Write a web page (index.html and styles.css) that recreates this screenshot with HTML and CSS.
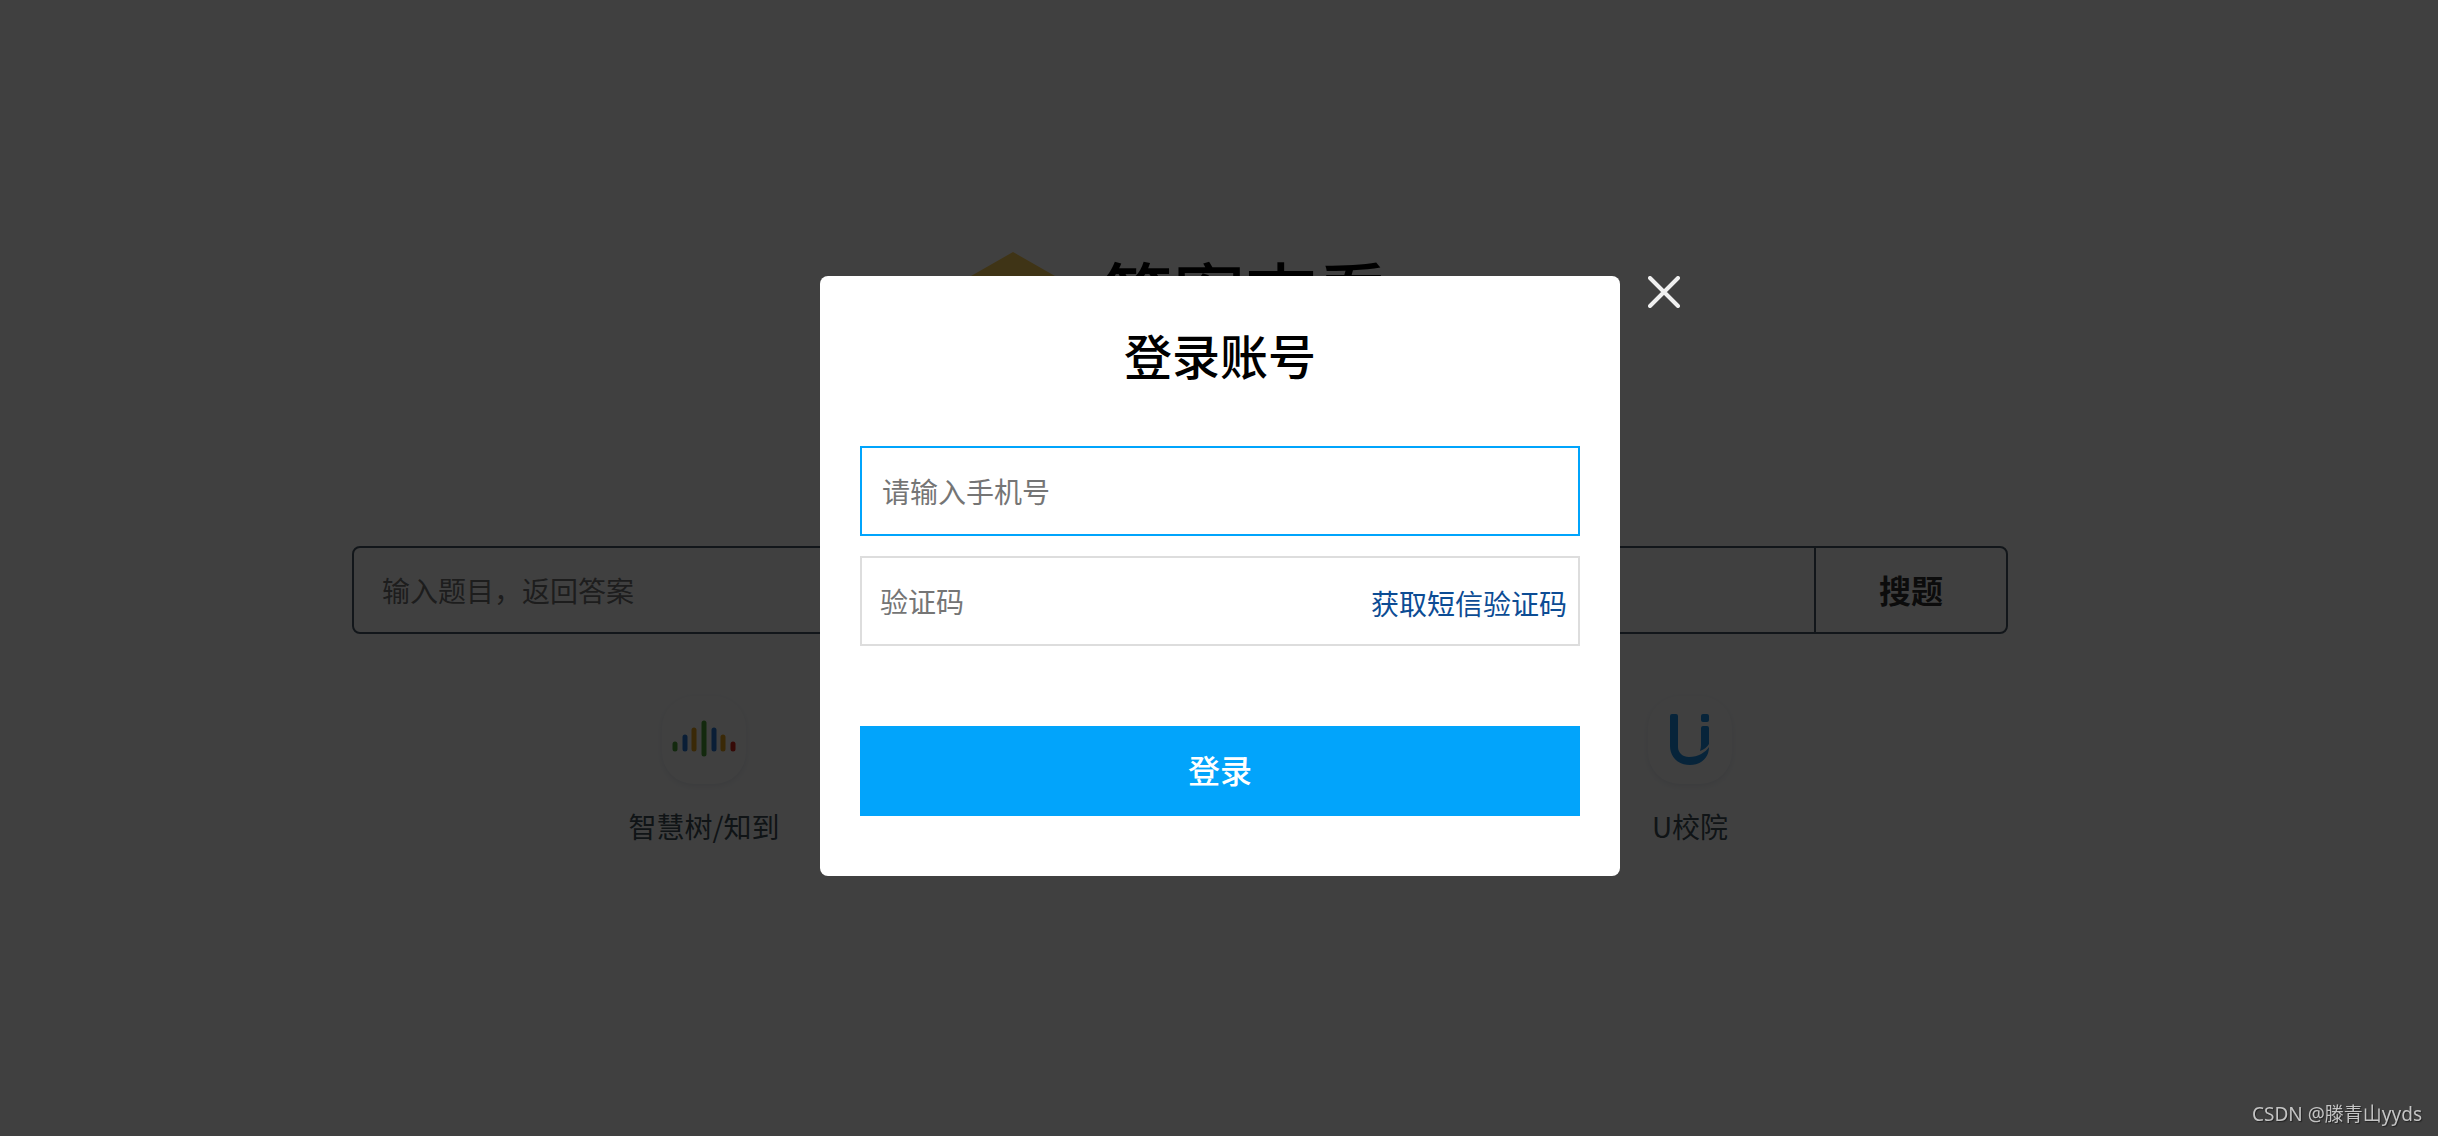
FILE: index.html
```html
<!DOCTYPE html>
<html lang="zh-CN">
<head>
  <meta charset="UTF-8">
  <meta name="viewport" content="width=device-width, initial-scale=1.0">
  <title>答案查看</title>
  <link rel="stylesheet" href="styles.css">
</head>
<body>
  <main class="page">
    <h1 class="logo">
      <svg class="logo-mark" viewBox="0 0 112 128" aria-hidden="true">
        <path d="M56 0 L112 32 V96 L56 128 L0 96 V32 Z" fill="#fcce58"/>
      </svg>
      <span>答案查看</span>
    </h1>

    <form class="search">
      <input class="search-input" type="text" placeholder="输入题目，返回答案" aria-label="输入题目">
      <button class="search-button" type="button">搜题</button>
    </form>

    <nav class="platforms">
      <a class="platform" href="#">
        <span class="platform-icon">
          <svg viewBox="0 0 84 88" aria-hidden="true">
            <g fill="none" stroke-width="5" stroke-linecap="round">
              <path d="M13 48v5" stroke="#4ba33a"/>
              <path d="M23 41v12M52 34v19" stroke="#2878d8"/>
              <path d="M32 34v19M61 41v12" stroke="#e8a21c"/>
              <path d="M42 27v31" stroke="#4ba33a"/>
              <path d="M71 48v5" stroke="#d8281c"/>
            </g>
          </svg>
        </span>
        智慧树/知到
      </a>
      <a class="platform" href="#">
        <span class="platform-icon">
          <svg viewBox="0 0 84 88" aria-hidden="true">
            <path d="M22 20q0-2 2-2h4q2 0 2 2v31c0 6 5 10 11 10c9 0 17-5 20-10c0 11-8 18-19 18c-13 0-20-9-20-19z" fill="#1c90e8"/>
            <path d="M53 32q0-2 2-2h4q2 0 2 2v16q-3 5-9 7q1-3 1-6z" fill="#1c90e8"/>
            <rect x="53" y="18" width="8" height="8" rx="2" fill="#1c90e8"/>
          </svg>
        </span>
        U校院
      </a>
    </nav>
  </main>

  <div class="overlay">
    <section class="modal" role="dialog" aria-labelledby="login-title">
      <button class="close" type="button" aria-label="关闭">
        <svg viewBox="0 0 32 32" aria-hidden="true">
          <path d="M2 2 L30 30 M30 2 L2 30" stroke="#f0f0f0" stroke-width="4" stroke-linecap="round"/>
        </svg>
      </button>
      <h2 class="modal-title" id="login-title">登录账号</h2>
      <form class="login">
        <input class="field field-active" type="tel" placeholder="请输入手机号" aria-label="手机号">
        <div class="field code">
          <input class="code-input" type="text" placeholder="验证码" aria-label="验证码">
          <button class="code-button" type="button">获取短信验证码</button>
        </div>
        <button class="submit" type="button">登录</button>
      </form>
    </section>
  </div>

  <div class="watermark">CSDN @滕青山yyds</div>
</body>
</html>
```

FILE: styles.css
```css
* {
  box-sizing: border-box;
}
body {
  margin: 0;
  min-height: 100vh;
  background-color: #fff;
  color: #333;
  font-family: "Noto Sans CJK SC", sans-serif;
}
input,
button {
  font-family: inherit;
}
.page {
  margin: 0 430px 0 352px;
  padding-top: 252px;
}
.logo {
  display: flex;
  justify-content: center;
  align-items: flex-start;
  gap: 32px;
  margin: 0;
  padding-right: 14px;
  color: #000;
  font-size: 72px;
  line-height: 80px;
  font-weight: 500;
}
.logo-mark {
  width: 112px;
  height: 128px;
}
.search {
  display: flex;
  height: 88px;
  margin-top: 166px;
  border: 2px solid #485868;
  border-radius: 8px;
}
.search-input {
  flex: 1;
  min-width: 0;
  padding: 0 28px;
  border: 0;
  background: none;
  font-size: 28px;
}
.search-input::placeholder {
  color: #757575;
}
.search-button {
  width: 192px;
  padding: 0 0 2px;
  border: 0;
  border-left: 2px solid #485868;
  background: none;
  color: #333;
  font-size: 32px;
  font-weight: 700;
}
.platforms {
  display: flex;
  justify-content: space-between;
  padding: 62px 206px 0 240px;
}
.platform {
  display: flex;
  flex-direction: column;
  align-items: center;
  gap: 22px;
  width: 224px;
  color: #405058;
  font-size: 28px;
  line-height: 40px;
  text-decoration: none;
}
.platform-icon {
  width: 84px;
  height: 88px;
  border-radius: 32px;
  box-shadow: 0 2px 6px rgba(60, 80, 140, 0.12);
}
.overlay {
  position: fixed;
  inset: 0;
  display: flex;
  justify-content: center;
  align-items: center;
  padding: 16px 0 0 2px;
  background-color: rgba(0, 0, 0, 0.75);
}
.modal {
  position: relative;
  width: 800px;
  padding: 42px 40px 60px;
  border-radius: 8px;
  background-color: #fff;
}
.close {
  position: absolute;
  top: 0;
  right: -60px;
  width: 32px;
  height: 32px;
  padding: 0;
  border: 0;
  background: none;
  cursor: pointer;
}
.close svg {
  display: block;
}
.modal-title {
  margin: 0 0 56px;
  color: #000;
  font-size: 48px;
  line-height: 72px;
  font-weight: 500;
  text-align: center;
}
.login {
  display: flex;
  flex-direction: column;
  gap: 20px;
}
.field {
  width: 100%;
  height: 90px;
  padding: 0 20px;
  border: 2px solid #ddd;
  background-color: #fff;
  font-size: 28px;
}
.field-active {
  border-color: #00a4fc;
}
.field::placeholder,
.code-input::placeholder {
  color: #757575;
}
.code {
  display: flex;
  align-items: center;
  padding: 0 11px 0 18px;
}
.code-input {
  flex: 1;
  min-width: 0;
  padding: 0;
  border: 0;
  font-size: 28px;
}
.code-button {
  padding: 4px 0 0;
  border: 0;
  background: none;
  color: #0c4c94;
  font-size: 28px;
  cursor: pointer;
}
.submit {
  height: 90px;
  margin-top: 60px;
  padding: 0 0 4px;
  border: 0;
  background-color: #02a4fb;
  color: #fff;
  font-size: 32px;
  font-weight: 500;
  cursor: pointer;
}
.watermark {
  position: fixed;
  right: 16px;
  bottom: 8px;
  color: #c4c4c4;
  font-family: "Noto Sans", "Noto Sans CJK SC", sans-serif;
  font-size: 19px;
  line-height: 28px;
  text-shadow: 1px 1px 1px #222;
}
```
